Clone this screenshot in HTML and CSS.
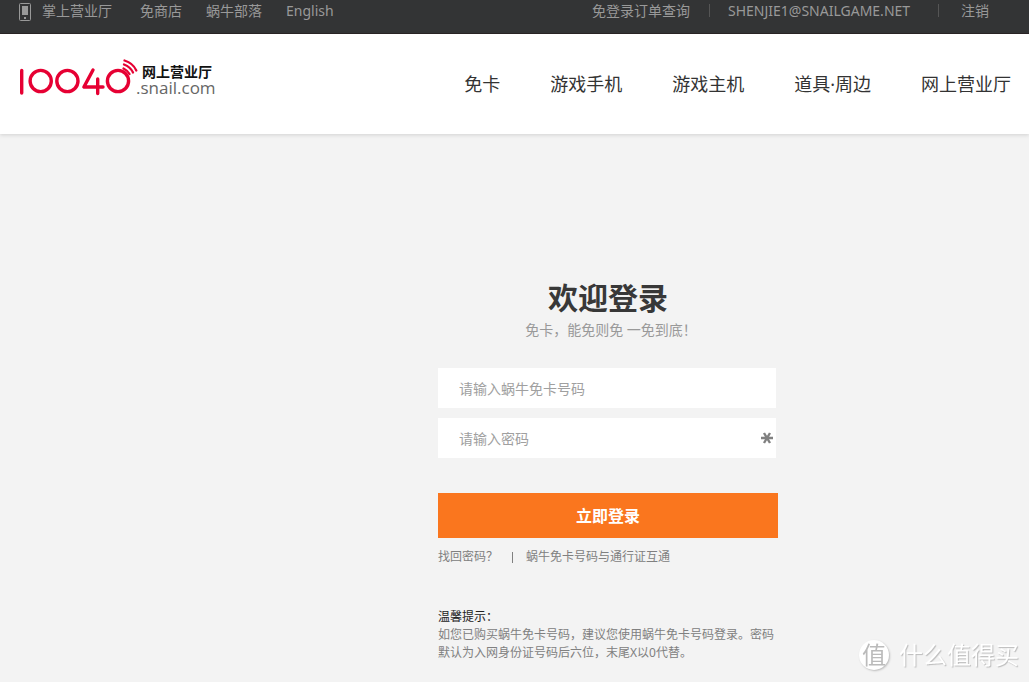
FILE: index.html
```html
<!DOCTYPE html>
<html lang="zh-CN">
<head>
<meta charset="utf-8">
<meta name="viewport" content="width=device-width, initial-scale=1">
<title>欢迎登录</title>
<link rel="stylesheet" href="styles.css">
</head>
<body>
<div class="topbar">
  <nav class="topbar-links">
    <a href="#" class="mobile-link"><svg class="phone" width="12" height="18" viewBox="0 0 12 18" aria-hidden="true"><rect x="0.5" y="0.5" width="11" height="17" rx="1" fill="none" stroke="#999"/><path d="M3 3h6v9H3zM5 14h2v2H5z" fill="#999"/></svg>掌上营业厅</a>
    <a href="#">免商店</a>
    <a href="#">蜗牛部落</a>
    <a href="#">English</a>
  </nav>
  <div class="account">
    <a href="#">免登录订单查询</a>
    <a href="#" class="email">SHENJIE1@SNAILGAME.NET</a>
    <a href="#" class="logout">注销</a>
  </div>
</div>
<header class="header">
  <a href="#" class="logo" aria-label="10040 网上营业厅">
    <svg class="logo-mark" width="120" height="40" viewBox="18 57 120 40" aria-hidden="true">
      <g fill="none" stroke="#e60033" stroke-width="3.400" stroke-linecap="round" stroke-linejoin="round">
        <path d="M21.700 70.500V93"/>
        <circle cx="40.700" cy="81" r="10.600"/>
        <circle cx="67.400" cy="81" r="10.600"/>
        <path d="M93 70L83.900 87H103M97.700 79V93.500"/>
        <circle cx="118" cy="81" r="10.600"/>
        <path stroke-width="2.300" d="M124.500 60.500Q133 63 136.300 70.500M124 64.500Q130.500 67 133 72.500M123.500 68.500Q127.500 70.500 129.500 74"/>
      </g>
    </svg>
    <span class="logo-text"><span class="logo-name">网上营业厅</span><span class="logo-domain">.snail.com</span></span>
  </a>
  <nav class="nav">
    <a href="#">免卡</a>
    <a href="#">游戏手机</a>
    <a href="#">游戏主机</a>
    <a href="#">道具·周边</a>
    <a href="#">网上营业厅</a>
  </nav>
</header>
<main class="main">
  <form class="login">
    <h1>欢迎登录</h1>
    <p class="slogan">免卡，能免则免 一免到底！</p>
    <input class="field" type="text" aria-label="免卡号码" placeholder="请输入蜗牛免卡号码">
    <div class="password">
      <input class="field" type="password" aria-label="密码" placeholder="请输入密码">
      <svg class="star" width="12" height="12" viewBox="0 0 12 12" aria-hidden="true"><path d="M0 6h12M3 1l6 10M9 1l-6 10" stroke="#808080" stroke-width="2.400"/></svg>
    </div>
    <button class="submit" type="submit">立即登录</button>
    <div class="help"><a href="#">找回密码？</a><span class="bar"></span><a href="#">蜗牛免卡号码与通行证互通</a></div>
    <div class="tips">
      <strong>温馨提示：</strong>
      <p>如您已购买蜗牛免卡号码，建议您使用蜗牛免卡号码登录。密码默认为入网身份证号码后六位，末尾X以0代替。</p>
    </div>
  </form>
</main>
<div class="watermark"><span class="seal">值</span><span>什么值得买</span></div>
</body>
</html>
```
FILE: styles.css
```css
* { box-sizing: border-box; }
body {
  margin: 0;
  min-height: 100vh;
  background: #f3f3f3;
  font-family: "Noto Sans", "Noto Sans CJK SC", sans-serif;
  font-size: 14px;
  line-height: 22px;
  color: #808080;
}
a { color: inherit; text-decoration: none; }
h1, p { margin: 0; }
.topbar {
  display: flex;
  justify-content: space-between;
  height: 34px;
  padding: 0 40px 0 19px;
  background: #333435;
  border-bottom: 1px solid #2b2526;
  color: #999;
}
.topbar-links { display: flex; align-items: flex-start; gap: 24px; }
.mobile-link { display: flex; gap: 11px; margin-right: 4px; }
.phone { margin-top: 3px; }
.account { display: flex; }
.email, .logout {
  margin-left: 19px;
  padding-left: 19px;
  background: linear-gradient(#555, #555) 0 4px / 1px 13px no-repeat;
}
.email { min-width: 210px; }
.logout { padding-left: 23px; }
.header {
  display: flex;
  justify-content: space-between;
  align-items: center;
  height: 100px;
  padding: 0 18px;
  background: #fff;
  box-shadow: 0 1px 4px rgba(0, 0, 0, .14);
}
.logo { display: flex; align-items: center; margin-bottom: 14px; }
.logo-mark { flex: none; }
.logo-text { display: flex; flex-direction: column; margin-top: 5px; margin-left: -2px; }
.logo-name { padding-left: 6px; font-size: 14px; font-weight: 700; line-height: 16px; color: #111; }
.logo-domain { font-size: 17px; line-height: 16px; color: #666; font-family: "Open Sans", sans-serif; }
.nav { display: flex; gap: 50px; font-size: 18px; line-height: 26px; color: #333; }
.main { display: flex; justify-content: center; padding: 144px 0 20px 187px; }
.login { width: 340px; }
h1 { font-size: 30px; line-height: 40px; font-weight: 700; text-align: center; color: #383838; }
.slogan { margin-bottom: 26px; padding-left: 6px; text-align: center; line-height: 24px; color: #999; }
.field {
  display: block;
  width: calc(100% - 2px);
  height: 40px;
  padding: 0 21px;
  border: 0;
  background: #fff;
  font: inherit;
  color: #333;
}
.field::placeholder { color: #a0a0a0; opacity: 1; }
.password { position: relative; margin-top: 10px; }
.star { position: absolute; right: 3px; top: 14px; }
.password .star { right: 5px; }
.submit {
  display: block;
  width: 100%;
  height: 45px;
  margin-top: 35px;
  border: 0;
  background: #fa761e;
  font: inherit;
  font-size: 16px;
  font-weight: 700;
  color: #fff;
}
.help { display: flex; align-items: center; margin-top: 10px; font-size: 12px; line-height: 18px; }
.bar { width: 1px; height: 11px; margin: 0 13px 0 14px; background: #808080; }
.tips { margin-top: 42px; font-size: 12px; line-height: 18px; }
.tips strong { display: block; font-weight: 400; color: #222; }
.watermark {
  position: fixed;
  right: 10px;
  bottom: 9px;
  display: flex;
  align-items: center;
  gap: 10px;
  font-size: 24px;
  line-height: 36px;
  color: #fff;
  text-shadow: 1px 1px 1px #bbb;
}
.seal {
  width: 30px;
  height: 30px;
  border-radius: 50%;
  background: #fff;
  box-shadow: 1px 1px 2px #bbb;
  font-size: 24px;
  line-height: 29px;
  text-align: center;
  color: #bbb;
  text-shadow: none;
}
```
